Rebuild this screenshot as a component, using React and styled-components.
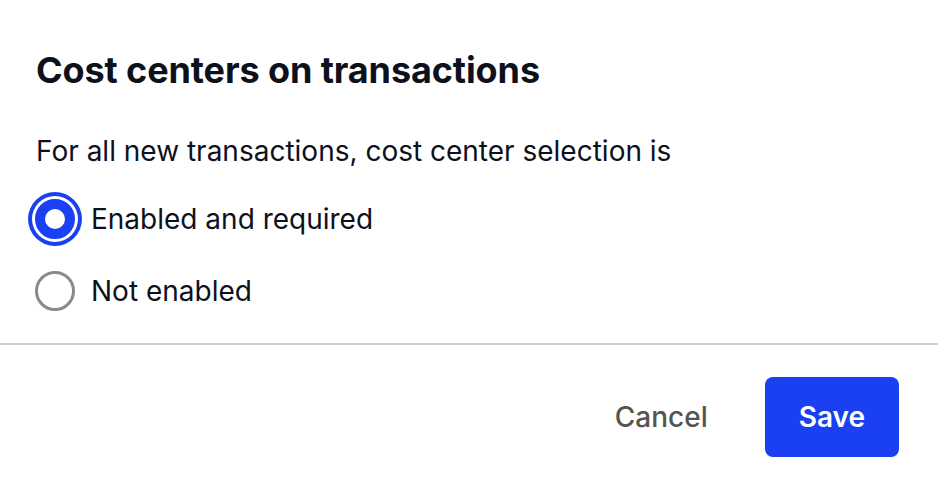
import React, { useState } from "react";
import styled, { createGlobalStyle } from "styled-components";

const GlobalStyle = createGlobalStyle`
  body {
    margin: 0;
    background: #fff;
    font-family: Inter, "Noto Sans", sans-serif;
    color: #0d111c;
  }
`;

const Dialog = styled.div`
  width: 938px;
  height: 498px;
  box-sizing: border-box;
  display: flex;
  flex-direction: column;
  background: #fff;
`;

const Body = styled.div`
  padding: 48px 36px 0;
  display: flex;
  flex-direction: column;
`;

const Title = styled.h1`
  margin: 0;
  font-size: 36px;
  line-height: 44px;
  font-weight: 700;
  letter-spacing: -0.1px;
`;

const Prompt = styled.p`
  margin: 42px 0 0;
  font-size: 28px;
  line-height: 34px;
`;

const Options = styled.div`
  margin-top: 31px;
  display: flex;
  flex-direction: column;
  gap: 32px;
`;

const Option = styled.label`
  display: flex;
  align-items: center;
  gap: 16px;
  font-size: 28px;
  line-height: 40px;
  cursor: pointer;
`;

const Radio = styled.span`
  width: 40px;
  height: 40px;
  box-sizing: border-box;
  border-radius: 50%;
  flex-shrink: 0;
  margin-left: -1px;
  border: ${(p) => (p.checked ? "10px solid #1a40f2" : "3px solid #8b8b86")};
  box-shadow: ${(p) =>
    p.checked ? "0 0 0 3px #fff, 0 0 0 7px #1a40f2" : "none"};
  background: #fff;
`;

const Divider = styled.hr`
  margin: 32px 0 0;
  border: 0;
  border-top: 2px solid #cfcfcb;
`;

const Footer = styled.div`
  display: flex;
  justify-content: flex-end;
  align-items: center;
  gap: 33px;
  padding: 32px 39px 0 0;
`;

const Button = styled.button`
  height: 80px;
  border: 0;
  border-radius: 8px;
  font-family: inherit;
  font-size: 28px;
  padding: 0 ${(p) => (p.primary ? "34px" : "24px")};
  font-weight: ${(p) => (p.primary ? 600 : 500)};
  color: ${(p) => (p.primary ? "#fff" : "#55554f")};
  background: ${(p) => (p.primary ? "#1a40f2" : "transparent")};
  cursor: pointer;
`;

const options = [
  { id: "required", label: "Enabled and required" },
  { id: "off", label: "Not enabled" }
];

export default function App() {
  const [value, setValue] = useState("required");

  return (
    <>
      <GlobalStyle />
      <Dialog>
        <Body>
          <Title>Cost centers on transactions</Title>
          <Prompt>For all new transactions, cost center selection is</Prompt>
          <Options>
            {options.map((o) => (
              <Option key={o.id} onClick={() => setValue(o.id)}>
                <Radio checked={value === o.id} />
                {o.label}
              </Option>
            ))}
          </Options>
        </Body>
        <Divider />
        <Footer>
          <Button>Cancel</Button>
          <Button primary>Save</Button>
        </Footer>
      </Dialog>
    </>
  );
}
